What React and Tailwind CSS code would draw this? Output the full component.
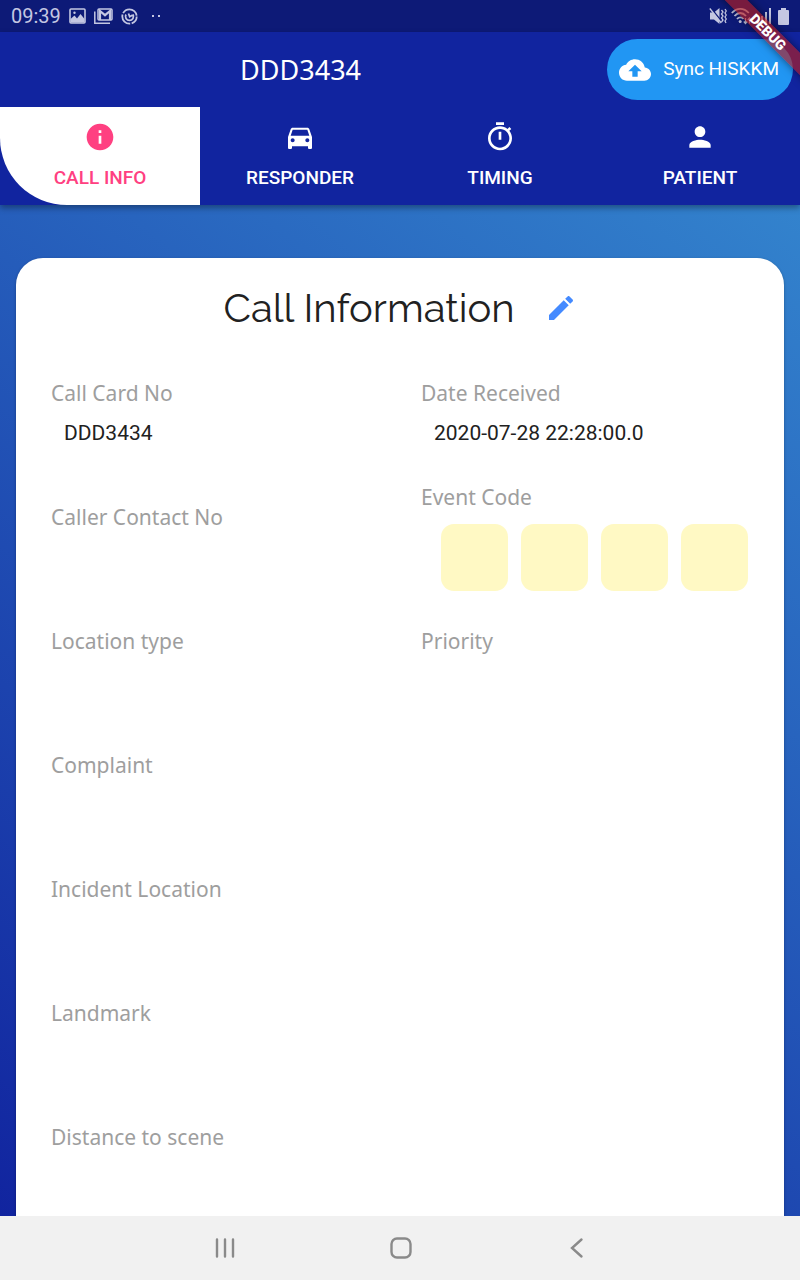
import React, { useState } from "react";

const PATHS = {
  info: "M12 2C6.48 2 2 6.48 2 12s4.48 10 10 10 10-4.48 10-10S17.52 2 12 2zm1 15h-2v-6h2v6zm0-8h-2V7h2v2z",
  car: "M18.92 6.01C18.72 5.42 18.16 5 17.5 5h-11c-.66 0-1.21.42-1.42 1.01L3 12v8c0 .55.45 1 1 1h1c.55 0 1-.45 1-1v-1h12v1c0 .55.45 1 1 1h1c.55 0 1-.45 1-1v-8l-2.08-5.99zM6.5 16c-.83 0-1.500-.67-1.500-1.500S5.670 13 6.500 13s1.500.67 1.500 1.500S7.330 16 6.500 16zm11 0c-.83 0-1.500-.67-1.500-1.500s.67-1.500 1.500-1.500 1.500.67 1.500 1.500-.67 1.500-1.500 1.500zM5 11l1.500-4.500h11L19 11H5z",
  timer: "M15 1H9v2h6V1zm-4 13h2V8h-2v6zm8.03-6.61l1.42-1.42c-.43-.51-.9-.99-1.41-1.41l-1.42 1.42C16.07 4.74 14.12 4 12 4c-4.97 0-9 4.03-9 9s4.02 9 9 9 9-4.03 9-9c0-2.12-.74-4.07-1.97-5.61zM12 20c-3.870 0-7-3.130-7-7s3.130-7 7-7 7 3.130 7 7-3.130 7-7 7z",
  person: "M12 12c2.210 0 4-1.790 4-4s-1.790-4-4-4-4 1.790-4 4 1.790 4 4 4zm0 2c-2.670 0-8 1.340-8 4v2h16v-2c0-2.660-5.330-4-8-4z",
  cloud: "M19.35 10.04C18.67 6.59 15.64 4 12 4 9.11 4 6.6 5.64 5.35 8.04 2.34 8.36 0 10.91 0 14c0 3.310 2.690 6 6 6h13c2.760 0 5-2.240 5-5 0-2.640-2.050-4.780-4.650-4.960zM14 13v4h-4v-4H7l5-5 5 5h-3z",
  edit: "M3 17.250V21h3.750L17.810 9.940l-3.750-3.750L3 17.250zM20.710 7.040c.39-.39.39-1.020 0-1.410l-2.340-2.340c-.39-.39-1.020-.39-1.410 0l-1.830 1.830 3.750 3.750 1.830-1.830z",
};

function Icon({ name, className = "size-8" }) {
  return (
    <svg viewBox="0 0 24 24" fill="currentColor" aria-hidden="true" className={className}>
      <path d={PATHS[name]} />
    </svg>
  );
}

function StatusBar() {
  return (
    <div className="flex h-8 shrink-0 items-center justify-between bg-[#0d1a77] px-[11px] text-[#c4c7e2]">
      <div className="flex items-center gap-2">
        <span className="text-xl leading-8">09:39</span>
        <svg viewBox="0 0 17 16" className="h-4 w-[17px]" fill="none" aria-hidden="true">
          <rect x="1" y="1" width="15" height="14" rx="1" stroke="currentColor" strokeWidth="1.600" />
          <path d="M1.500 14.500V11l4-3.500 2.500 3L11.500 6l4 5v3.500z" fill="currentColor" />
          <circle cx="5.500" cy="4.800" r="1.200" fill="currentColor" />
        </svg>
        <svg viewBox="0 0 19 16" className="h-4 w-[19px]" fill="none" stroke="currentColor" aria-hidden="true">
          <path d="M.8 3.500V15.200H16" strokeWidth="1.500" />
          <rect x="4" y="1" width="14" height="11" rx="1" strokeWidth="1.500" />
          <path d="M6 12V3l5 4.200L16 3v9" strokeWidth="2.200" />
        </svg>
        <svg viewBox="0 0 17 17" className="size-[17px]" fill="none" stroke="currentColor" strokeWidth="1.800" aria-hidden="true">
          <circle cx="8.500" cy="8.500" r="7.200" strokeDasharray="9 1.500 14 1.500 18 1.240" />
          <path d="M5 6.500a4 4 0 1 0 7 0M7.500 5.500l1.200 3.200 3-1.700" />
        </svg>
        <svg viewBox="0 0 10 4" className="ml-1.5 h-1 w-2.5" fill="currentColor" aria-hidden="true">
          <rect x="0" y="1" width="2" height="2" />
          <rect x="6" y="1" width="2" height="2" />
        </svg>
      </div>
      <div className="flex items-center gap-1">
        <svg viewBox="0 0 18 18" className="size-[18px]" fill="none" stroke="currentColor" aria-hidden="true">
          <path d="M1 5.500h4L10.500 1v16L5 12.500H1z" fill="currentColor" stroke="none" />
          <path d="M1.500 .5L13 15" stroke="#0d1a77" strokeWidth="1.500" />
          <path d="M.8 1.500l11.500 14.500" strokeWidth="1.300" />
          <path d="M12.500 3l1.500 2-1.500 2 1.500 2-1.500 2 1.500 2-1.500 2M16 2l1.300 2L16 6l1.300 2L16 10l1.300 2L16 14l1 2" strokeWidth="1.300" />
        </svg>
        <svg viewBox="0 0 21 18" className="h-[18px] w-[21px]" fill="none" stroke="currentColor" strokeWidth="1.800" aria-hidden="true">
          <path d="M.8 6c5-5.500 12-5.500 17 0M3.500 9c3.500-4 8-4 11.500 0M6 12c2-2.300 4.500-2.300 6.500 0" />
          <circle cx="9.200" cy="14.500" r="1.500" fill="currentColor" stroke="none" />
          <path d="M14.500 11v5M12.800 14.500l1.700 2 1.700-2M18.500 16.500v-5M16.800 13l1.700-2 1.700 2" strokeWidth="1.200" />
        </svg>
        <svg viewBox="0 0 16 16" className="h-4 w-4" fill="currentColor" aria-hidden="true">
          <path d="M1 12h2v4H1zM5 8h2v8H5zM9 4h2v12H9zM13 0h2v16h-2z" />
        </svg>
        <svg viewBox="0 0 11 17" className="ml-0.5 h-[17px] w-[11px]" fill="currentColor" aria-hidden="true">
          <path d="M3 0h5v2h2a1 1 0 0 1 1 1v13a1 1 0 0 1-1 1H1a1 1 0 0 1-1-1V3a1 1 0 0 1 1-1h2z" />
        </svg>
      </div>
    </div>
  );
}

const TABS = [
  { label: "CALL INFO", icon: "info" },
  { label: "RESPONDER", icon: "car" },
  { label: "TIMING", icon: "timer" },
  { label: "PATIENT", icon: "person" },
];

function Tabs() {
  const [active, setActive] = useState(0);
  return (
    <div role="tablist" className="grid grid-cols-4">
      {TABS.map((tab, i) => (
        <button
          key={tab.label}
          type="button"
          role="tab"
          aria-selected={i === active}
          onClick={() => setActive(i)}
          className={
            "flex flex-col items-center gap-[13px] pt-3.5 pb-[15px] text-[19px] leading-6 font-medium " +
            (i === active ? "rounded-bl-[67px] bg-white text-[#ff4081]" : "text-white")
          }
        >
          <Icon name={tab.icon} />
          {tab.label}
        </button>
      ))}
    </div>
  );
}

function Field({ label, value }) {
  return (
    <div className="h-[68px]">
      <dt className="font-['Noto_Sans',sans-serif] text-[21px] leading-7 text-[#9e9e9e]">{label}</dt>
      <dd className="mt-3 pl-[13px] text-[21px] leading-7 text-[#212121]">{value}</dd>
    </div>
  );
}

function EventCode() {
  return (
    <div>
      <dt className="font-['Noto_Sans',sans-serif] text-[21px] leading-7 text-[#9e9e9e]">Event Code</dt>
      <dd className="mt-[13px] flex gap-[13px] pl-5">
        {[1, 2, 3, 4].map((n) => (
          <input
            key={n}
            type="text"
            maxLength={1}
            aria-label={`Event code character ${n}`}
            className="size-[67px] rounded-[13px] bg-[#fff9c4] text-center text-[21px] text-[#212121]"
          />
        ))}
      </dd>
    </div>
  );
}

function Row({ children }) {
  return <div className="grid min-h-[124px] grid-cols-2 items-center gap-[42px]">{children}</div>;
}

export default function App() {
  return (
    <div className="relative flex h-screen flex-col overflow-hidden font-[Roboto,sans-serif]">
      <StatusBar />
      <header className="relative z-10 shrink-0 bg-[#11249f] shadow-[0_3px_6px_rgba(0,0,0,0.35)]">
        <div className="flex h-[75px] items-center pr-[7px]">
          <h1 className="flex-1 pr-1.5 text-center font-['Noto_Sans',sans-serif] text-[27px] leading-9 text-white">
            DDD3434
          </h1>
          <button
            type="button"
            className="flex h-[61px] items-center gap-3 rounded-full bg-[#2196f3] pr-3.5 pl-3 text-[19px] text-white"
          >
            <Icon name="cloud" />
            Sync HISKKM
          </button>
        </div>
        <Tabs />
      </header>

      <main className="flex-1 overflow-y-auto bg-[linear-gradient(218deg,#3383cd,#11249f)] px-4 pt-[53px] [scrollbar-width:none]">
        <section className="rounded-t-[27px] bg-white px-[35px] shadow-[0_1px_3px_rgba(0,0,0,0.3)]">
          <div className="flex items-center justify-center gap-[30px] pt-7 pb-[21px]">
            <h2 className="font-[Raleway,Lato,sans-serif] text-[40px] leading-[44px] font-normal text-[#212121]">
              Call Information
            </h2>
            <button type="button" aria-label="Edit" className="text-[#448aff]">
              <Icon name="edit" />
            </button>
          </div>
          <dl>
            <Row>
              <Field label="Call Card No" value="DDD3434" />
              <Field label="Date Received" value="2020-07-28 22:28:00.0" />
            </Row>
            <Row>
              <Field label="Caller Contact No" />
              <EventCode />
            </Row>
            <Row>
              <Field label="Location type" />
              <Field label="Priority" />
            </Row>
            <Row>
              <Field label="Complaint" />
            </Row>
            <Row>
              <Field label="Incident Location" />
            </Row>
            <Row>
              <Field label="Landmark" />
            </Row>
            <Row>
              <Field label="Distance to scene" />
            </Row>
          </dl>
        </section>
      </main>

      <nav aria-label="System" className="flex h-16 shrink-0 items-center justify-center bg-[#f1f1f1] pl-0.5 text-[#8a8a8a]">
        <button type="button" aria-label="Recent apps" className="flex w-44 justify-center">
          <svg viewBox="0 0 24 24" className="size-6" fill="none" stroke="currentColor" strokeWidth="2.400" strokeLinecap="round">
            <path d="M4 3.500v17M12 3.500v17M20 3.500v17" />
          </svg>
        </button>
        <button type="button" aria-label="Home" className="flex w-44 justify-center">
          <svg viewBox="0 0 24 24" className="size-6" fill="none" stroke="currentColor" strokeWidth="2.400">
            <rect x="2.500" y="2.500" width="19" height="19" rx="5.500" />
          </svg>
        </button>
        <button type="button" aria-label="Back" className="flex w-44 justify-center">
          <svg viewBox="0 0 24 24" className="size-6" fill="none" stroke="currentColor" strokeWidth="2.400" strokeLinecap="round">
            <path d="M16.500 3.500L7 12l9.500 8.500" />
          </svg>
        </button>
      </nav>

      <div className="pointer-events-none absolute top-0 right-0 z-20 size-24 overflow-hidden">
        <div className="absolute top-6 -right-9 w-[136px] rotate-45 bg-[#b71c1c]/63 text-center text-[14px] leading-4 font-black text-white shadow-[0_0_8px_rgba(0,0,0,0.5)]">
          DEBUG
        </div>
      </div>
    </div>
  );
}
